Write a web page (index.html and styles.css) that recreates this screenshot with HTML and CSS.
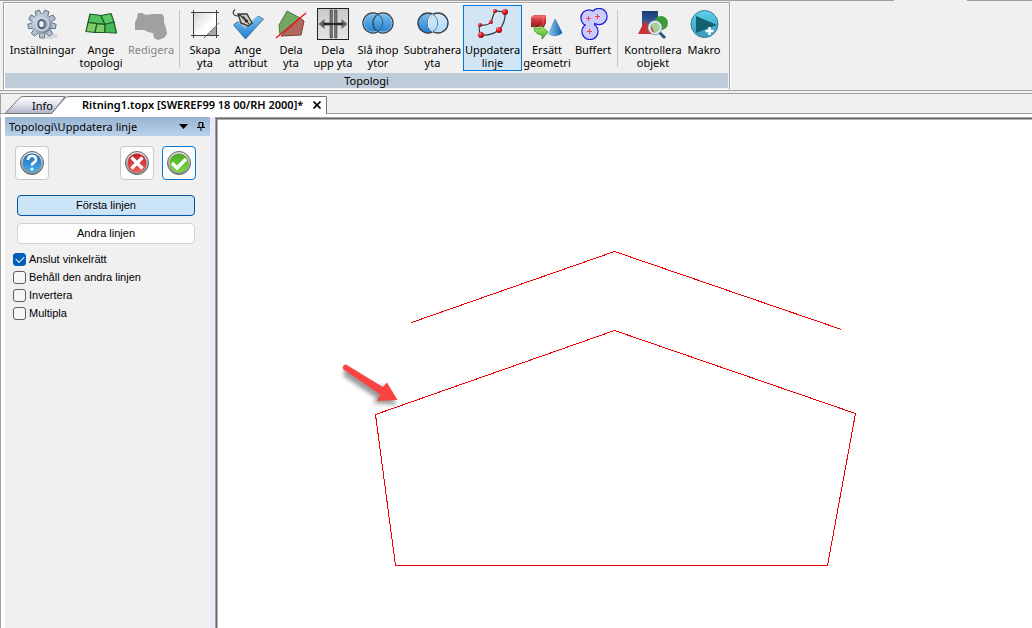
FILE: index.html
```html
<!DOCTYPE html>
<html lang="sv">
<head>
<meta charset="utf-8">
<title>Ritning1.topx</title>
<link rel="stylesheet" href="styles.css">
</head>
<body>
<svg class="defs" width="0" height="0" aria-hidden="true">
  <defs>
    <linearGradient id="steel" x1="0" y1="0" x2="1" y2="1"><stop offset="0" stop-color="#dde6ee"/><stop offset=".5" stop-color="#a7b5c4"/><stop offset="1" stop-color="#5f7388"/></linearGradient>
    <linearGradient id="paper" x1="0" y1="0" x2="1" y2="1"><stop offset="0" stop-color="#d4d4d4"/><stop offset=".6" stop-color="#fff"/></linearGradient>
    <linearGradient id="blue" x1="0" y1="0" x2="0" y2="1"><stop offset="0" stop-color="#7cc0f0"/><stop offset="1" stop-color="#1f7fd0"/></linearGradient>
    <linearGradient id="pale" x1="0" y1="0" x2="0" y2="1"><stop offset="0" stop-color="#d3e9fa"/><stop offset="1" stop-color="#b4dcfa"/></linearGradient>
    <linearGradient id="grayish" x1="0" y1="0" x2="0" y2="1"><stop offset="0" stop-color="#c8c8c8"/><stop offset="1" stop-color="#e6e6e6"/></linearGradient>
    <radialGradient id="ball" cx=".35" cy=".3" r=".7"><stop offset="0" stop-color="#ff8080"/><stop offset=".5" stop-color="#e01828"/><stop offset="1" stop-color="#900"/></radialGradient>
    <linearGradient id="redcube" x1="0" y1="0" x2="0" y2="1"><stop offset="0" stop-color="#f06060"/><stop offset="1" stop-color="#a00c14"/></linearGradient>
    <linearGradient id="cone" x1="0" y1="0" x2="1" y2="0"><stop offset="0" stop-color="#8ccaf0"/><stop offset="1" stop-color="#1560a8"/></linearGradient>
    <linearGradient id="lime" x1="0" y1="0" x2="0" y2="1"><stop offset="0" stop-color="#b6f07c"/><stop offset="1" stop-color="#3eae1e"/></linearGradient>
    <linearGradient id="navy" x1="0" y1="0" x2="0" y2="1"><stop offset="0" stop-color="#173a70"/><stop offset="1" stop-color="#3a6cae"/></linearGradient>
    <linearGradient id="cyan" x1="0" y1="0" x2="0" y2="1"><stop offset="0" stop-color="#5bd2ec"/><stop offset="1" stop-color="#3a98b8"/></linearGradient>
    <linearGradient id="bBlue" x1="0" y1="0" x2="0" y2="1"><stop offset="0" stop-color="#1d6db8"/><stop offset="1" stop-color="#4bacf0"/></linearGradient>
    <linearGradient id="bRed" x1="0" y1="0" x2="0" y2="1"><stop offset="0" stop-color="#c41c24"/><stop offset="1" stop-color="#f06058"/></linearGradient>
    <linearGradient id="bGreen" x1="0" y1="0" x2="0" y2="1"><stop offset="0" stop-color="#48a822"/><stop offset="1" stop-color="#7ade3c"/></linearGradient>
    <linearGradient id="ring" x1="0" y1="0" x2="0" y2="1"><stop offset="0" stop-color="#e4e4e4"/><stop offset="1" stop-color="#8c8c8c"/></linearGradient>
    <linearGradient id="infoTab" x1="0" y1="0" x2="0" y2="1"><stop offset="0" stop-color="#fff"/><stop offset=".45" stop-color="#e4e4ee"/><stop offset="1" stop-color="#b0b2cc"/></linearGradient>
    <filter id="soft" x="-30%" y="-30%" width="160%" height="180%"><feGaussianBlur stdDeviation="2"/></filter>
    <path id="tooth" d="M12 8l.8-6h4.400l.8 6z"/>
  </defs>
</svg>

<header class="ribbon">
  <section class="group" aria-label="Topologi">
    <div class="tools">
      <button class="tool" type="button">
        <svg class="icon" viewBox="0 0 32 32"><ellipse cx="22" cy="28" rx="9" ry="3" fill="#d6d6d6"/><g fill="#b4c2d0" stroke="#5d7085" stroke-width=".9"><use href="#tooth" transform="rotate(20 15 16)"/><use href="#tooth" transform="rotate(60 15 16)"/><use href="#tooth" transform="rotate(100 15 16)"/><use href="#tooth" transform="rotate(140 15 16)"/><use href="#tooth" transform="rotate(180 15 16)"/><use href="#tooth" transform="rotate(220 15 16)"/><use href="#tooth" transform="rotate(260 15 16)"/><use href="#tooth" transform="rotate(300 15 16)"/><use href="#tooth" transform="rotate(340 15 16)"/></g><circle cx="15" cy="16" r="10" fill="url(#steel)"/><circle cx="15" cy="16" r="6.500" fill="none" stroke="#ccd7e2" stroke-width="1.500"/><ellipse cx="14.500" cy="16" rx="3.200" ry="4" fill="#eef2f6" stroke="#4d6278" stroke-width="1.800"/></svg>
        <span>Inställningar</span>
      </button>
      <button class="tool" type="button">
        <svg class="icon" viewBox="0 0 32 32"><g stroke="#1c5c24" stroke-width="1.200" stroke-linejoin="round"><path d="M5 6l11 1.500L20 16.500 3 14.500z" fill="#52c060"/><path d="M16 7.500L26 5.500l3 8.500-9 2.500z" fill="#5ac868"/><path d="M3 14.500l9 1.200L10 24.500 1 23.500z" fill="#80ca68"/><path d="M12 15.700l8 .8v8H10z" fill="#7ccc68"/><path d="M20 16.500l9-2.500 2.500 11L20 24.500z" fill="#48b858"/></g></svg>
        <span>Ange<br>topologi</span>
      </button>
      <button class="tool" type="button" disabled>
        <svg class="icon" viewBox="0 0 32 32"><path d="M3 5l4 0 4 2 6-1 5 0 5 0 2 3 0 5 2 6 1 6-3 4-6 2-4-2-1-5-5-1-4-2-9 0v-8l2-4z" fill="#a0a0a0"/></svg>
        <span>Redigera</span>
      </button>
      <i class="sep"></i>
      <button class="tool" type="button">
        <svg class="icon" viewBox="0 0 32 32"><path d="M4.500 4.500h23v15l-8 8h-15z" fill="url(#paper)"/><path d="M27.500 17v10.500H17z" fill="#a8a8a8"/><path d="M2 4.500h28M4.500 2v28M2 27.500h28M27.500 2v28" stroke="#404040" fill="none"/><path d="M15 30L30 15" stroke="#606060" stroke-dasharray="3 1"/></svg>
        <span>Skapa<br>yta</span>
      </button>
      <button class="tool" type="button">
        <svg class="icon" viewBox="0 0 32 32"><path d="M1.500 17l4.500-3.500 7 6L26 8l5.500 3-18 20z" fill="url(#blue)" stroke="#23659c" stroke-width=".8"/><path d="M6 14l7 6L26 8.500" fill="none" stroke="#b4dcf8" stroke-width=".8"/><path d="M6 6l9 0 5 9-4 3-7-3z" fill="#cfcbc2" stroke="#3c3a36" stroke-width="1.400"/><path d="M8 7l6 6M3 1.500Q-.5 5 2.500 7T8 7M11 8l6 8" stroke="#333" stroke-width="1.100" fill="none"/><circle cx="14.500" cy="13" r="1.500" fill="#222"/></svg>
        <span>Ange<br>attribut</span>
      </button>
      <button class="tool" type="button">
        <svg class="icon" viewBox="0 0 32 32"><path d="M12 3l13 7L5 27 4 17z" fill="#72a860" stroke="#4d7c40"/><path d="M25 10l4 3-3 14-20 1z" fill="#b2695c" stroke="#7e4038"/><path d="M1 30L31 5" stroke="#f00c18" stroke-width="1.300"/></svg>
        <span>Dela<br>yta</span>
      </button>
      <button class="tool" type="button">
        <svg class="icon" viewBox="0 0 32 32"><rect x=".5" y=".5" width="31" height="31" fill="url(#grayish)" stroke="#222"/><path d="M13 2h2.500v28H13zM17.500 2H20v28h-2.500z" fill="#747474" stroke="#484848" stroke-width=".6"/><path d="M1.500 16l6-5v3.500H13v3H7.500V21zM30.500 16l-6-5v3.500H19v3h5.500V21z" fill="#666"/><path d="M6 16h20" stroke="#111" stroke-width="1.500"/></svg>
        <span>Dela<br>upp yta</span>
      </button>
      <button class="tool" type="button">
        <svg class="icon" viewBox="0 0 32 32"><g fill="url(#blue)" stroke="#34424f" stroke-width="1.400"><circle cx="11" cy="15" r="10"/><circle cx="21" cy="15" r="10"/></g><g fill="none" stroke="#a8c8de" stroke-width=".8"><circle cx="11" cy="15" r="9"/><circle cx="21" cy="15" r="9"/></g><path d="M16 6.500a10 10 0 0 1 0 17a10 10 0 0 1 0-17z" fill="url(#blue)" stroke="#34566f"/></svg>
        <span>Slå ihop<br>ytor</span>
      </button>
      <button class="tool" type="button">
        <svg class="icon" viewBox="0 0 32 32"><circle cx="11" cy="15" r="10" fill="url(#blue)" stroke="#34424f" stroke-width="1.400"/><circle cx="21" cy="15" r="10" fill="url(#pale)" stroke="#34424f" stroke-width="1.400"/><path d="M16 6.500a10 10 0 0 1 0 17" fill="none" stroke="#5c8098"/><path d="M16 6.500a10 10 0 0 0 0 17" fill="none" stroke="#fff" stroke-width="1.200"/></svg>
        <span>Subtrahera<br>yta</span>
      </button>
      <button class="tool active" type="button" aria-pressed="true">
        <svg class="icon" viewBox="0 0 32 32"><path d="M4 27Q1 22 3 17Q11 18 14 14Q16 8 18 3L28 4Q29 14 22 22Q14 28 4 27" fill="none" stroke="#333" stroke-width="1.200"/><g fill="url(#ball)"><circle cx="3" cy="17" r="2"/><circle cx="14" cy="14" r="2"/><circle cx="18" cy="3" r="2"/><circle cx="28" cy="4" r="3"/><circle cx="22" cy="22" r="3"/><circle cx="4" cy="27" r="3"/></g></svg>
        <span>Uppdatera<br>linje</span>
      </button>
      <button class="tool" type="button">
        <svg class="icon" viewBox="0 0 32 32"><path d="M0 9l3-2h12v8l-2 4H0z" fill="url(#redcube)"/><path d="M0 9h12l3-2M12 9v9" stroke="#ff9a90" stroke-width=".5" fill="none"/><path d="M24 10l7.500 15q-6 6-14.500 1z" fill="url(#cone)"/><path d="M3 17q1 4 6 4v-4l8 7-6 7v-4q-9-1-8-10z" fill="url(#lime)" stroke="#2f8e20" stroke-width=".8"/></svg>
        <span>Ersätt<br>geometri</span>
      </button>
      <button class="tool" type="button">
        <svg class="icon" viewBox="0 0 32 32"><g fill="#ccccfc" stroke="#1818d8" stroke-width="2.400"><circle cx="12" cy="10" r="7.500"/><circle cx="22" cy="8.500" r="7.500"/><circle cx="13" cy="23.500" r="7.500"/></g><g fill="#ccccfc"><circle cx="12" cy="10" r="7.500"/><circle cx="22" cy="8.500" r="7.500"/><circle cx="13" cy="23.500" r="7.500"/><path d="M9 14h8v6H9z"/></g><path d="M9 10.500h5M11.500 8v5M18 8.500h5M20.500 6v5M10 23.500h5M12.500 21v5" stroke="#f04050"/></svg>
        <span>Buffert</span>
      </button>
      <i class="sep"></i>
      <button class="tool" type="button">
        <svg class="icon" viewBox="0 0 32 32"><path d="M5 3h16v16H5z" fill="url(#navy)"/><circle cx="24" cy="15" r="7" fill="#3f9a38"/><path d="M8 12l8 14H1z" fill="#c83434"/><path d="M22 24l6 6" stroke="#2a5580" stroke-width="3"/><circle cx="18" cy="19.500" r="6" fill="#a6cfa0" stroke="#e4eaee" stroke-width="2"/><path d="M14 17l4 8q-5-1-4-8z" fill="#c86050"/><circle cx="18" cy="19.500" r="7.200" fill="none" stroke="#647c90" stroke-width=".7"/></svg>
        <span>Kontrollera<br>objekt</span>
      </button>
      <button class="tool" type="button">
        <svg class="icon" viewBox="0 0 32 32"><circle cx="16.500" cy="16" r="13.500" fill="url(#cyan)" stroke="#347f98"/><path d="M8 8l21 9-21 8z" fill="#17606f"/><path d="M21.500 19v8M17.500 23h8" stroke="#fff" stroke-width="2.500"/></svg>
        <span>Makro</span>
      </button>
    </div>
    <div class="caption">Topologi</div>
  </section>
</header>

<nav class="tabs">
  <button class="tab info" type="button">
    <svg class="shape" viewBox="0 0 62 18"><path d="M1 17.500L15 2.500Q17 .5 19 .5H61L48 17.500z" fill="url(#infoTab)" stroke="#777"/></svg>
    <span>Info</span>
  </button>
  <div class="tab doc">
    <svg class="shape" viewBox="0 0 276 19"><path d="M0 19L13 3Q15 .5 18 .5H275.500V19z" fill="#fff"/><path d="M0 18L13 3Q15 .5 18 .5H275.500V18" fill="none" stroke="#777"/></svg>
    <span>Ritning1.topx [SWEREF99 18 00/RH 2000]*</span>
    <button class="close" type="button" aria-label="Stäng"><svg width="8" height="8" viewBox="0 0 8 8"><path d="M.5.5l7 7M7.500.5l-7 7" stroke="#000" stroke-width="1.600"/></svg></button>
  </div>
</nav>

<main class="work">
  <aside class="panel">
    <div class="panel-head">
      <h1>Topologi\Uppdatera linje</h1>
      <svg width="9" height="5" viewBox="0 0 9 5"><path d="M0 0h9L4.500 5z" fill="#000"/></svg>
      <svg width="8" height="9" viewBox="0 0 8 9"><path d="M2 .5h4v5H2zM5.500 1v4M0 5.500h8M4 6v3" fill="none" stroke="#000"/></svg>
    </div>
    <div class="actions">
      <button class="round" type="button" aria-label="Hjälp"><svg width="26" height="26" viewBox="0 0 26 26"><circle cx="13" cy="13" r="11.500" fill="url(#ring)" stroke="#666"/><circle cx="13" cy="13" r="9.500" fill="url(#bBlue)"/><path d="M9 10q0-4 4-4t4 3.500q0 2-2 3t-2 3" fill="none" stroke="#fff" stroke-width="2.600"/><circle cx="13" cy="19" r="1.600" fill="#fff"/></svg></button>
      <button class="round push" type="button" aria-label="Avbryt"><svg width="26" height="26" viewBox="0 0 26 26"><circle cx="13" cy="13" r="11.500" fill="url(#ring)" stroke="#666"/><circle cx="13" cy="13" r="9.500" fill="url(#bRed)"/><path d="M7.500 7.500l11 11M18.500 7.500l-11 11" stroke="#fff" stroke-width="3.200"/></svg></button>
      <button class="round ok" type="button" aria-label="OK"><svg width="26" height="26" viewBox="0 0 26 26"><circle cx="13" cy="13" r="11.500" fill="url(#ring)" stroke="#666"/><circle cx="13" cy="13" r="9.500" fill="url(#bGreen)"/><path d="M6 13l5 5 9-9" fill="none" stroke="#fff" stroke-width="3.400"/></svg></button>
    </div>
    <div class="choices">
      <button class="choice selected" type="button" aria-pressed="true">Första linjen</button>
      <button class="choice" type="button">Andra linjen</button>
    </div>
    <div class="options">
      <label><input type="checkbox" checked>Anslut vinkelrätt</label>
      <label><input type="checkbox">Behåll den andra linjen</label>
      <label><input type="checkbox">Invertera</label>
      <label><input type="checkbox">Multipla</label>
    </div>
  </aside>
  <section class="canvas" aria-label="Ritning">
    <svg width="814" height="508" viewBox="218 120 814 508">
      <g fill="none" stroke="#f00000" shape-rendering="crispEdges">
        <path d="M411.500 322.500L614.500 251.500L841.500 329.500"/>
        <path d="M375.500 414.500L614.500 330.500L855.500 413.500L827.500 565.500H395.500z"/>
      </g>
      <path d="M346 370l34 22 3-5 11 16-18-1 3-4-34-23z" fill="#555" stroke="#555" stroke-width="3" opacity=".6" filter="url(#soft)"/>
      <path d="M346 364.500L383 387L387 382.500L397.500 400L377 401L380 394.500L343.500 369.500A3 3 0 0 1 346 364.500z" fill="#fa4444"/>
    </svg>
  </section>
</main>
</body>
</html>
```

FILE: styles.css
```css
* { box-sizing: border-box; }

body {
  margin: 0;
  min-height: 100vh;
  display: flex;
  flex-direction: column;
  background: #f0f0f0;
  color: #000;
  font: 11px/13px "Noto Sans", "Open Sans", sans-serif;
}

button {
  margin: 0;
  padding: 0;
  border: 0;
  background: none;
  color: inherit;
  font: inherit;
}

.defs { position: absolute; }

.ribbon {
  display: flex;
  height: 91px;
  padding: 1px 0 0 3px;
  border-bottom: 1px solid #a0a0a0;
  background:
    linear-gradient(#a0a0a0, #a0a0a0) 0 0 / 894px 1px no-repeat,
    linear-gradient(#a0a0a0, #a0a0a0) 967px 0 / 100% 1px no-repeat,
    #f0f0f0;
}

.group {
  height: 88px;
  margin-top: 1px;
  border: 1px solid #a0a0a0;
  border-bottom-color: #fff;
  box-shadow: inset 1px 1px #fff, 1px 0 #fff;
  padding: 2px 1px 0;
}

.tools {
  display: grid;
  grid-template-columns: 67px 50px 50px 8px 42px 44px 42px 42px 48px 61px 59px 50px 42px 8px 62px 40px;
  height: 68px;
  padding: 0 4px;
}

.tool {
  height: 66px;
  border: 1px solid transparent;
  padding-top: 2px;
  display: flex;
  flex-direction: column;
  align-items: center;
  gap: 3px;
  white-space: nowrap;
}

.tool span { display: block; }
.tool:disabled { color: #858585; }
.tool.active { background: #d2e5f4; border-color: #0078d7; }
.icon { width: 32px; height: 32px; flex: none; }
.sep { width: 1px; height: 57px; margin: 5px 0 0 3px; background: #c4c4c4; }

.caption {
  height: 15px;
  line-height: 15px;
  background: #bfccda;
  text-align: center;
}

.tabs {
  display: flex;
  height: 24px;
  margin-top: 2px;
  padding: 2px 0 0 3px;
  border-top: 1px solid #a0a0a0;
  border-left: 1px solid #a0a0a0;
  border-bottom: 3px solid #fff;
  background: linear-gradient(#a0a0a0, #a0a0a0) 0 100% / 100% 1px no-repeat;
}

.tab { position: relative; height: 18px; line-height: 15px; text-align: left; }
.tab span { position: relative; }
.info { width: 47px; padding-left: 28px; }
.doc { width: 276px; padding: 0 6px 2px 31px; display: flex; align-items: center; font-weight: 600; white-space: nowrap; }
.shape { position: absolute; left: 0; top: 0; height: 18px; }
.info .shape { width: 62px; }
.doc .shape { width: 276px; height: 19px; }
.close { position: relative; display: flex; margin: 2px 0 0 auto; }

.work { flex: 1; display: flex; border-left: 1px solid #a0a0a0; }

.panel {
  width: 214px;
  border-left: 4px solid #fff;
  border-right: 5px solid #e8eafa;
}

.panel-head {
  display: flex;
  align-items: center;
  gap: 9px;
  height: 19px;
  padding: 0 5px 0 4px;
  background: linear-gradient(#99b4d1, #b9d1ea);
}
.panel-head h1 { flex: 1; margin: 0; font: inherit; }

.actions { display: flex; gap: 8px; padding: 10px 14px 0 10px; }
.round {
  display: flex;
  align-items: center;
  justify-content: center;
  width: 34px;
  height: 34px;
  border: 1px solid #c8c8c8;
  border-radius: 4px;
  background: #fdfdfd;
}
.push { margin-left: auto; }
.ok { border-color: #0078d4; }

.choices,
.options { font-family: "Liberation Sans", Arial, sans-serif; }

.choices { display: flex; flex-direction: column; gap: 7px; padding: 15px 15px 0 12px; }
.choice { height: 21px; border: 1px solid #d0d0d0; border-radius: 4px; background: #fdfdfd; }
.selected { background: #cce4f7; border-color: #0054a0; }

.options { display: flex; flex-direction: column; padding: 6px 8px; }
.options label { display: flex; align-items: center; gap: 3px; height: 18px; }
.options input {
  appearance: none;
  width: 13px;
  height: 13px;
  margin: 0;
  border: 1px solid #5c5c5c;
  border-radius: 3px;
  background: #f6f6f6;
}
.options input:checked {
  border-color: #005fb8;
  background: #005fb8;
  display: grid;
  place-items: center;
}
.options input:checked::after {
  content: "";
  width: 7px;
  height: 4px;
  margin-bottom: 2px;
  border: solid #fff;
  border-width: 0 0 1px 1px;
  transform: rotate(-45deg);
}

.canvas {
  flex: 1;
  min-width: 0;
  overflow: hidden;
  padding: 2px 0 0 2px;
  border-top: 1px solid #a0a0a0;
  border-left: 1px solid #a0a0a0;
  box-shadow: inset 1px 1px #696969, inset 2px 2px #b0b0b0;
  background: #fff;
}
.canvas svg { display: block; }
```
